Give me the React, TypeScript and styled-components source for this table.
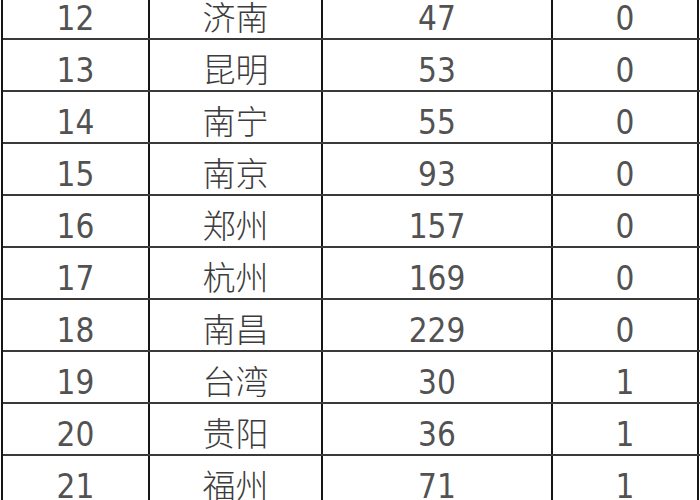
import { FC } from 'react'
import styled, { createGlobalStyle } from 'styled-components'

interface Row {
  rank: number
  city: string
  count: number
  flag: number
}

const rows: Row[] = [
  { rank: 12, city: '济南', count: 47, flag: 0 },
  { rank: 13, city: '昆明', count: 53, flag: 0 },
  { rank: 14, city: '南宁', count: 55, flag: 0 },
  { rank: 15, city: '南京', count: 93, flag: 0 },
  { rank: 16, city: '郑州', count: 157, flag: 0 },
  { rank: 17, city: '杭州', count: 169, flag: 0 },
  { rank: 18, city: '南昌', count: 229, flag: 0 },
  { rank: 19, city: '台湾', count: 30, flag: 1 },
  { rank: 20, city: '贵阳', count: 36, flag: 1 },
  { rank: 21, city: '福州', count: 71, flag: 1 },
]

const GlobalStyle = createGlobalStyle`
  html, body {
    margin: 0;
    padding: 0;
    background: #ffffff;
    overflow: hidden;
  }
`

const App: FC = () => {
  return (
    <Page>
      <GlobalStyle />
      <Table>
        {rows.map((row) => (
          <TableRow key={row.rank}>
            <Cell $numeric>{row.rank}</Cell>
            <Cell>{row.city}</Cell>
            <Cell $numeric>{row.count}</Cell>
            <Cell $numeric>{row.flag}</Cell>
          </TableRow>
        ))}
      </Table>
    </Page>
  )
}

const Page = styled.div`
  width: 700px;
  height: 500px;
  overflow: hidden;
  background: #ffffff;
`

const Table = styled.div`
  display: flex;
  flex-direction: column;
  margin-top: -12px;
  margin-left: 1px;
  width: 699px;
  border-left: 2px solid #161616;
  box-sizing: border-box;
`

const TableRow = styled.div`
  display: grid;
  grid-template-columns: 147px 173px 230px 146px;
  height: 52px;
  box-sizing: border-box;
  border-bottom: 2px solid #3a3a3a;
`

const Cell = styled.div<{ $numeric?: boolean }>`
  display: flex;
  align-items: center;
  justify-content: center;
  box-sizing: border-box;
  border-right: 2px solid #161616;
  padding-top: 11px;
  font-family: 'DejaVu Sans Condensed', 'DejaVu Sans', 'Noto Sans CJK SC', sans-serif;
  font-stretch: semi-condensed;
  font-weight: 300;
  font-size: 33px;
  line-height: 1;
  color: ${(p) => (p.$numeric ? '#525252' : '#3c3c3c')};
`

export default App
